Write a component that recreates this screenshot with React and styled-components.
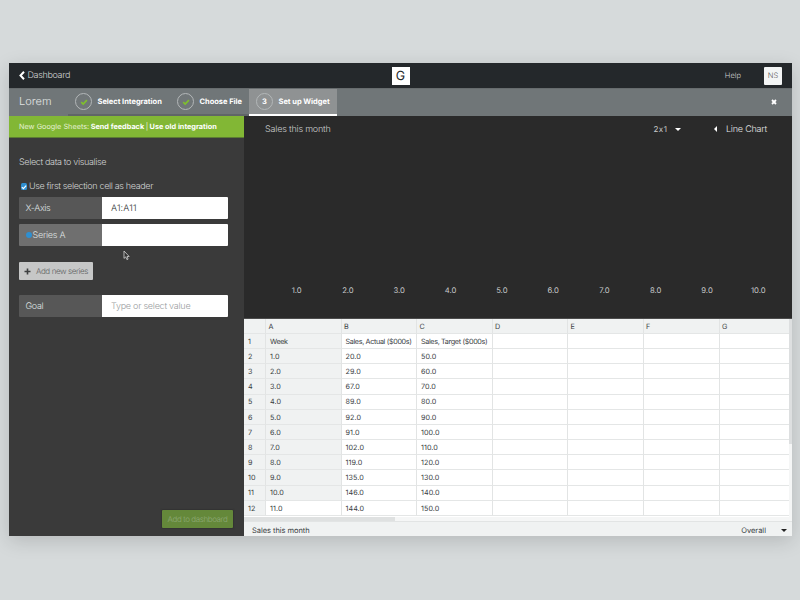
import styled, { createGlobalStyle } from "styled-components";

const GlobalStyle = createGlobalStyle`
  * {
    box-sizing: border-box;
  }
  body {
    margin: 0;
    background: #d6dadb;
    font-family: Inter, "Liberation Sans", sans-serif;
    font-weight: 400;
    font-feature-settings: "calt" 0;
    text-rendering: geometricPrecision;
  }
`;

const Page = styled.div`
  width: 800px;
  height: 600px;
  padding: 63px 8px 64px 9px;
  overflow: hidden;
`;
const Window = styled.div`
  position: relative;
  display: flex;
  flex-direction: column;
  height: 473px;
  background: #3a3a3a;
  box-shadow: 0 5px 18px rgba(0, 0, 0, 0.15);
`;

const Label = styled.span`
  flex: none;
  font-size: ${(props) => props.$size || 8}px;
  font-weight: ${(props) => props.$weight || 400};
  letter-spacing: ${(props) => props.$spacing || 0}px;
  line-height: 12px;
  white-space: nowrap;
`;
const FormLabel = styled(Label)`
  padding-top: 2px;
  font-size: 9px;
  font-weight: 300;
  letter-spacing: ${(props) => props.$spacing || -0.35}px;
`;

const TopBar = styled.header`
  display: grid;
  grid-template-columns: 1fr 18px 1fr;
  align-items: center;
  height: 25px;
  padding: 0 10px;
  background: #24282b;
  color: #d0d2d3;
`;
const BackLink = styled.div`
  display: flex;
  align-items: center;
  gap: 2.5px;
`;
const Logo = styled.div`
  display: flex;
  align-items: center;
  justify-content: center;
  width: 18px;
  height: 18px;
  padding-top: 2px;
  background: #fff;
  color: #222628;
  font-size: 12.5px;
`;
const UserMenu = styled.div`
  display: flex;
  align-items: center;
  justify-content: flex-end;
  gap: 23px;
`;
const Avatar = styled.div`
  display: flex;
  align-items: center;
  justify-content: center;
  width: 18px;
  height: 18px;
  border-radius: 1px;
  background: #f3f5f5;
  color: #55595b;
`;

const StepBar = styled.nav`
  display: flex;
  height: 28px;
  background: #707678;
  border-top: 1px solid #676c6e;
  color: #fff;
`;
const WidgetName = styled.div`
  display: flex;
  align-items: center;
  width: 59px;
  padding: 0 0 3px 10px;
  color: #e2e4e4;
`;
const Step = styled.div`
  display: flex;
  align-items: center;
  gap: 5.5px;
  width: ${(props) => props.$width}px;
  padding-left: 7px;
  border-bottom: 2px solid ${(props) => (props.$active ? "#fff" : "#606567")};
  background: ${(props) => (props.$active ? "#8f9293" : "transparent")};
`;
const StepCircle = styled.div`
  display: flex;
  align-items: center;
  justify-content: center;
  width: 17px;
  height: 17px;
  border: 1px solid #b3b7b8;
  border-radius: 50%;
`;
const CloseButton = styled.div`
  display: flex;
  align-items: center;
  margin-left: auto;
  padding: 0 15px 1px 0;
`;

const Body = styled.div`
  display: flex;
  height: 420px;
`;

const Sidebar = styled.aside`
  display: flex;
  flex-direction: column;
  width: 235px;
  background: #3a3a3a;
  color: #d0d2d2;
`;
const Notice = styled.div`
  display: flex;
  align-items: center;
  gap: 1.5px;
  height: 22px;
  padding-left: 10px;
  border-bottom: 1px solid #5c7c33;
  background: #82b735;
  color: #e4f0d2;

  b {
    color: #fff;
  }
`;
const Form = styled.div`
  display: flex;
  flex: 1;
  flex-direction: column;
  align-items: flex-start;
  padding: 17px 16px 8px 10px;
`;
const CheckRow = styled.div`
  display: flex;
  align-items: center;
  gap: 2px;
  height: 12px;
  margin: 11px 0 5px 2px;
`;
const Checkbox = styled.div`
  display: flex;
  align-items: center;
  justify-content: center;
  width: 6px;
  height: 7px;
  margin-top: 1px;
  border-radius: 1.5px;
  background: #2f8fd0;
`;
const Field = styled.div`
  display: flex;
  width: 209px;
  height: 22px;
  margin-bottom: 5px;
`;
const FieldName = styled.div`
  display: flex;
  align-items: center;
  gap: 1px;
  width: 83px;
  padding-left: 6.5px;
  border-radius: 1px 0 0 1px;
  background: ${(props) => (props.$active ? "#6f6f6f" : "#575757")};
  color: #dfe1e1;
`;
const FieldValue = styled.div`
  display: flex;
  flex: 1;
  align-items: center;
  padding-left: 9px;
  border-radius: 0 1px 1px 0;
  background: #fff;
  color: ${(props) => (props.$placeholder ? "#999d9e" : "#2f3234")};
`;
const SeriesDot = styled.i`
  width: 6px;
  height: 6px;
  border-radius: 50%;
  background: #2f8fd0;
`;
const AddSeries = styled.div`
  display: flex;
  align-items: center;
  gap: 5px;
  width: 74px;
  height: 18px;
  margin: 11px 0 15px;
  padding-left: 5px;
  border-radius: 1px;
  background: #c6c7c7;
  color: #606263;
`;
const SubmitButton = styled.div`
  display: flex;
  align-items: center;
  justify-content: center;
  align-self: flex-end;
  width: 71px;
  height: 18px;
  margin: auto -5px 0 0;
  border-radius: 1px;
  background: #64883a;
  box-shadow: 0 0 1px 1px #333;
  color: #8fa977;
`;

const Main = styled.main`
  display: flex;
  flex: 1;
  flex-direction: column;
  min-width: 0;
`;
const Preview = styled.section`
  display: flex;
  flex-direction: column;
  justify-content: space-between;
  height: 203px;
  padding: 6px 0 21px;
  border-bottom: 1px solid #4c4c4c;
  background: #2a2a2a;
  color: #c9cbcc;
`;
const PreviewHeader = styled.div`
  display: flex;
  align-items: center;
  padding: 0 25px 0 21px;
`;
const SizePicker = styled.div`
  display: flex;
  align-items: center;
  gap: 7.5px;
  margin-left: auto;
`;
const ChartType = styled.div`
  display: flex;
  align-items: center;
  gap: 9px;
  margin-left: 33px;
  color: #e4e5e5;
`;
const Axis = styled.div`
  display: grid;
  grid-template-columns: repeat(10, 51.3px);
  padding-left: 27px;
  text-align: center;
`;
const Triangle = styled.i`
  width: 0;
  height: 0;
  ${(props) =>
    props.$left
      ? `
    border: 3px solid transparent;
    border-left: 0;
    border-right: 3px solid #fff;`
      : `
    border: 3px solid transparent;
    border-bottom: 0;
    border-top: 3px solid ${props.$color || "#fff"};`}
`;

const SheetArea = styled.section`
  display: flex;
  height: 198px;
  background: #fff;
`;
const Sheet = styled.div`
  width: 545px;
`;
const SheetRow = styled.div`
  display: grid;
  grid-template-columns: 22px 75.5px 75.5px 75.5px 75.5px 75.5px 76px 69.5px;
  height: ${(props) => (props.$head ? 15 : 15.17)}px;
`;
const Cell = styled.div`
  display: flex;
  align-items: center;
  padding: 1.5px 0 0 ${(props) => props.$pad}px;
  border-right: 1px solid #e2e4e4;
  border-bottom: 1px solid #e4e6e6;
  background: ${(props) => (props.$shaded ? "#f0f2f2" : "#fff")};
  color: #393d3f;

  &:last-child {
    border-right: 0;
  }
`;
const VerticalTrack = styled.div`
  width: 3px;
  background: #f5f6f6;
`;
const VerticalThumb = styled.div`
  height: 125px;
  background: #dddfe0;
`;
const HorizontalTrack = styled.div`
  height: 4px;
  background: #f5f6f6;
`;
const HorizontalThumb = styled.div`
  width: 151px;
  height: 4px;
  background: #dfe1e1;
`;
const SheetFooter = styled.footer`
  display: flex;
  align-items: center;
  justify-content: space-between;
  height: 15px;
  padding: 3px 5px 0 8px;
  border-top: 1px solid #e2e4e4;
  background: #f0f2f2;
  color: #393d3f;
`;
const Overall = styled.div`
  display: flex;
  align-items: center;
  gap: 15px;
`;

const Cursor = styled.svg`
  position: absolute;
  left: 114px;
  top: 187px;
`;

const columns = ["A", "B", "C", "D", "E", "F", "G"];
const rows = [
  ["Week", "Sales, Actual ($000s)", "Sales, Target ($000s)"],
  ["1.0", "20.0", "50.0"],
  ["2.0", "29.0", "60.0"],
  ["3.0", "67.0", "70.0"],
  ["4.0", "89.0", "80.0"],
  ["5.0", "92.0", "90.0"],
  ["6.0", "91.0", "100.0"],
  ["7.0", "102.0", "110.0"],
  ["8.0", "119.0", "120.0"],
  ["9.0", "135.0", "130.0"],
  ["10.0", "146.0", "140.0"],
  ["11.0", "144.0", "150.0"],
];
const ticks = ["1.0", "2.0", "3.0", "4.0", "5.0", "6.0", "7.0", "8.0", "9.0", "10.0"];

function Check({ size, color }) {
  return (
    <svg width={size} height={size} viewBox="0 0 8 8" fill="none">
      <path d="M1.2 4.2 3.2 6.1 6.9 2.1" stroke={color} strokeWidth="1.6" />
    </svg>
  );
}

function StepItem({ width, active, done, number, title }) {
  return (
    <Step $width={width} $active={active}>
      <StepCircle>
        {done ? (
          <Check size={8} color="#7fc02c" />
        ) : (
          <Label $size={7.5} $weight={700}>{number}</Label>
        )}
      </StepCircle>
      <Label $size={7.5} $weight={700} $spacing={-0.03}>{title}</Label>
    </Step>
  );
}

function SetupForm() {
  return (
    <Sidebar>
      <Notice>
        <Label $size={7.3}>New Google Sheets:</Label>
        <Label $size={7.3} as="b" $weight={700}>Send feedback</Label>
        <Label $size={7.3}>|</Label>
        <Label $size={7.3} as="b" $weight={700}>Use old integration</Label>
      </Notice>
      <Form>
        <FormLabel>Select data to visualise</FormLabel>
        <CheckRow>
          <Checkbox>
            <Check size={6} color="#fff" />
          </Checkbox>
          <FormLabel>Use first selection cell as header</FormLabel>
        </CheckRow>
        <Field>
          <FieldName>
            <FormLabel>X-Axis</FormLabel>
          </FieldName>
          <FieldValue>
            <FormLabel $spacing={0.15}>A1:A11</FormLabel>
          </FieldValue>
        </Field>
        <Field>
          <FieldName $active>
            <SeriesDot />
            <FormLabel $spacing={-0.25}>Series A</FormLabel>
          </FieldName>
          <FieldValue />
        </Field>
        <AddSeries>
          <svg width="7" height="7" viewBox="0 0 7 7">
            <path d="M3.5.5v6M.5 3.5h6" stroke="#3e4041" strokeWidth="1.6" />
          </svg>
          <Label $size={8} $weight={300} $spacing={-0.4}>Add new series</Label>
        </AddSeries>
        <Field>
          <FieldName>
            <FormLabel>Goal</FormLabel>
          </FieldName>
          <FieldValue $placeholder>
            <FormLabel $spacing={-0.25}>Type or select value</FormLabel>
          </FieldValue>
        </Field>
        <SubmitButton>
          <Label $size={8} $weight={300} $spacing={-0.4}>Add to dashboard</Label>
        </SubmitButton>
      </Form>
    </Sidebar>
  );
}

function Spreadsheet() {
  return (
    <SheetArea>
      <Sheet>
        <SheetRow $head>
          <Cell $shaded />
          {columns.map((name) => (
            <Cell key={name} $shaded $pad={2.5}>
              <Label $size={7.2}>{name}</Label>
            </Cell>
          ))}
        </SheetRow>
        {rows.map((row, index) => (
          <SheetRow key={index}>
            <Cell $shaded $pad={4}>
              <Label $size={7.2}>{index + 1}</Label>
            </Cell>
            {columns.map((name, col) => (
              <Cell key={name} $pad={4} $shaded={col === 0 && index < 11}>
                <Label $size={7.2} $spacing={index ? 0.05 : -0.34}>{row[col]}</Label>
              </Cell>
            ))}
          </SheetRow>
        ))}
      </Sheet>
      <VerticalTrack>
        <VerticalThumb />
      </VerticalTrack>
    </SheetArea>
  );
}

function App() {
  return (
    <Page>
      <GlobalStyle />
      <Window>
        <TopBar>
          <BackLink>
            <svg width="6" height="9" viewBox="0 0 6 9" fill="none">
              <path d="M5 .8 1.5 4.5 5 8.2" stroke="#fff" strokeWidth="2" />
            </svg>
            <Label $size={9} $weight={300} $spacing={-0.35}>Dashboard</Label>
          </BackLink>
          <Logo>G</Logo>
          <UserMenu>
            <Label $size={7.5} $weight={300}>Help</Label>
            <Avatar>
              <Label $size={7.5} $weight={300}>NS</Label>
            </Avatar>
          </UserMenu>
        </TopBar>
        <StepBar>
          <WidgetName>
            <Label $size={11} $weight={300}>Lorem</Label>
          </WidgetName>
          <StepItem width={102} done title="Select Integration" />
          <StepItem width={79} done title="Choose File" />
          <StepItem width={88} active number="3" title="Set up Widget" />
          <CloseButton>
            <svg width="6" height="6" viewBox="0 0 6 6">
              <path d="M1 1 5 5M5 1 1 5" stroke="#fff" strokeWidth="1.8" />
            </svg>
          </CloseButton>
        </StepBar>
        <Body>
          <SetupForm />
          <Main>
            <Preview>
              <PreviewHeader>
                <FormLabel $spacing={-0.2}>Sales this month</FormLabel>
                <SizePicker>
                  <Label $size={8} $spacing={0.5}>2x1</Label>
                  <Triangle />
                </SizePicker>
                <ChartType>
                  <Triangle $left />
                  <FormLabel $spacing={-0.2}>Line Chart</FormLabel>
                </ChartType>
              </PreviewHeader>
              <Axis>
                {ticks.map((tick) => (
                  <Label key={tick} $size={7.7}>{tick}</Label>
                ))}
              </Axis>
            </Preview>
            <Spreadsheet />
            <HorizontalTrack>
              <HorizontalThumb />
            </HorizontalTrack>
            <SheetFooter>
              <Label $size={7.5} $spacing={-0.05}>Sales this month</Label>
              <Overall>
                <Label $size={7.5}>Overall</Label>
                <Triangle $color="#222" />
              </Overall>
            </SheetFooter>
          </Main>
        </Body>
        <Cursor width="8" height="11" viewBox="0 0 8 11">
          <path
            d="M1 1v7.4l1.7-1.5 1.2 2.7 1.2-.5-1.1-2.6h2.2Z"
            fill="#333"
            stroke="#d5d5d5"
            strokeWidth=".8"
          />
        </Cursor>
      </Window>
    </Page>
  );
}

export default App;
